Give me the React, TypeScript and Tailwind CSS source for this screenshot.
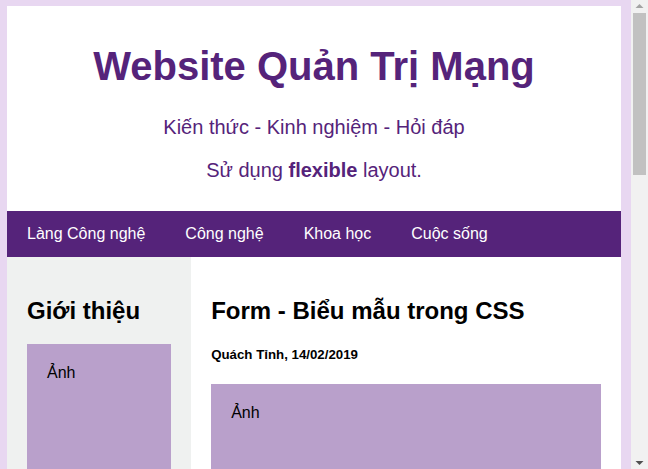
const navLinks = ["Làng Công nghệ", "Công nghệ", "Khoa học", "Cuộc sống"];

const FakeImg = ({ className = "" }: { className?: string }) => (
  <div className={`bg-[#b9a0cb] p-5 text-base leading-[18px] ${className}`}>Ảnh</div>
);

// Vẽ lại thanh cuộn của trình duyệt
const Scrollbar = () => (
  <div className="flex w-[17px] shrink-0 flex-col items-center bg-[#f1f1f1]">
    <svg width="17" height="13" viewBox="0 0 17 13" className="shrink-0">
      <path d="M4.5 8 L8.5 4 L12.5 8 Z" fill="#a3a3a3" />
    </svg>
    <div className="h-[162px] w-[13px] bg-[#c1c1c1]" />
    <div className="flex-1" />
    <svg width="17" height="13" viewBox="0 0 17 13" className="shrink-0">
      <path d="M4.5 5 L8.5 9 L12.5 5 Z" fill="#505050" />
    </svg>
  </div>
);

const App = () => {
  return (
    <div className="flex h-screen overflow-hidden font-['Liberation_Sans',Arial,sans-serif] text-black">
      <div className="min-w-0 flex-1 overflow-hidden bg-[#e8d7f1] pt-[6px] pl-[7px] pr-[10px] pb-6">
        {/* Header */}
        <header className="bg-white text-center text-[#55237a] px-[10px] pt-[37px] pb-[29px]">
          <h1 className="text-[40px] leading-[46px] font-bold">Website Quản Trị Mạng</h1>
          <p className="mt-[27px] text-[20px] leading-[23px]">Kiến thức - Kinh nghiệm - Hỏi đáp</p>
          <p className="mt-5 text-[20px] leading-[23px]">
            Sử dụng <b>flexible</b> layout.
          </p>
        </header>

        {/* Navbar */}
        <nav className="flex bg-[#55237a]">
          {navLinks.map((link) => (
            <a key={link} href="#" className="px-5 py-[14px] text-base leading-[18px] text-white">
              {link}
            </a>
          ))}
        </nav>

        {/* Content */}
        <div className="flex">
          <aside className="w-[30%] bg-[#eff1f0] p-5">
            <h2 className="mt-5 text-[24px] leading-[28px] font-bold">Giới thiệu</h2>
            <FakeImg className="mt-[19px] h-[200px]" />
          </aside>

          <main className="w-[70%] bg-white p-5">
            <h2 className="mt-5 text-[24px] leading-[28px] font-bold">Form - Biểu mẫu trong CSS</h2>
            <h5 className="mt-[22px] text-[13.28px] leading-[15px] font-bold">Quách Tỉnh, 14/02/2019</h5>
            <FakeImg className="mt-[22px] h-[200px]" />
          </main>
        </div>
      </div>
      <Scrollbar />
    </div>
  );
};

export default App;
